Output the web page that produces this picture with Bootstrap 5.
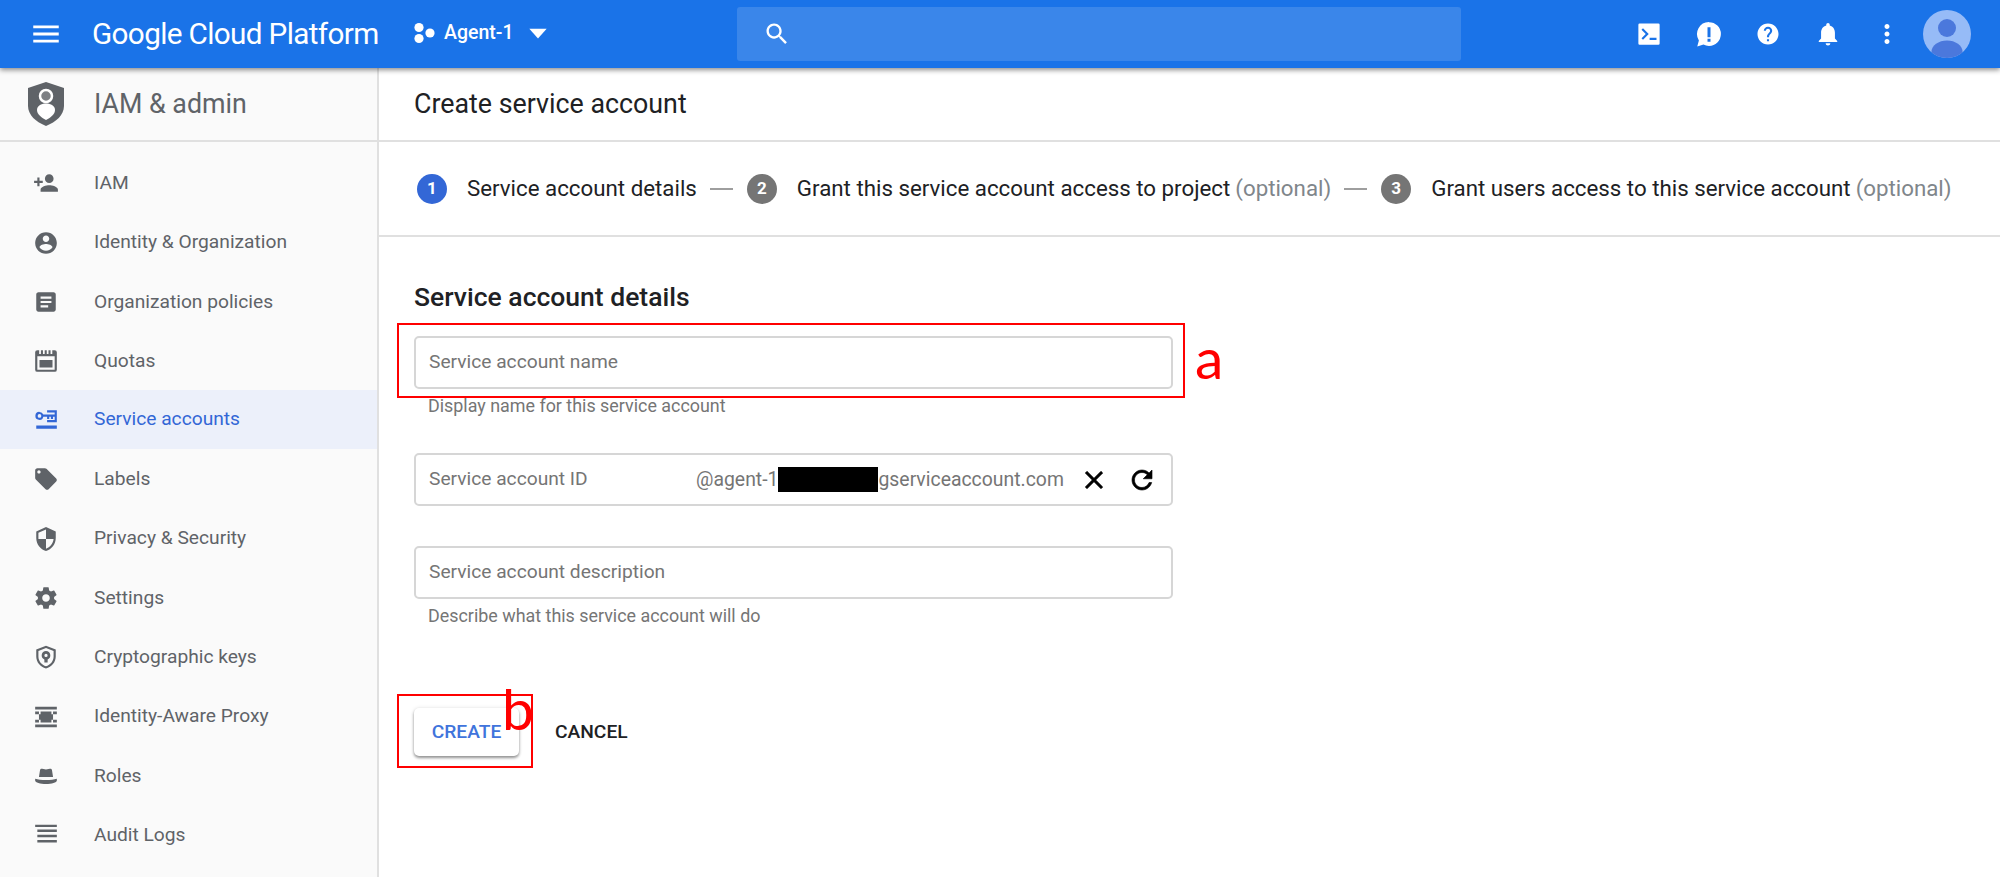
<!DOCTYPE html>
<html lang="en">
<head>
    <meta charset="UTF-8">
    <meta name="viewport" content="width=device-width, initial-scale=1.0">
    <title>Create service account</title>
    <link href="https://cdn.jsdelivr.net/npm/bootstrap@5.3.0/dist/css/bootstrap.min.css" rel="stylesheet">
    <style>
        html, body { height: 100%; overflow: hidden; }
        body { font-family: Roboto, "Liberation Sans", sans-serif; color: #202124; background: #fff; }
        svg { display: block; fill: currentColor; flex: none; }

        .topbar { height: 68px; padding: 0; background: #1a73e8; color: #fff; box-shadow: 0 2px 5px rgba(0,0,0,.45); z-index: 5; flex-wrap: nowrap; justify-content: flex-start; }
        .menu-btn { width: 34px; height: 34px; margin-left: 29px; }
        .gcp-brand { margin: 0 0 0 29px; padding: 0; width: 320px; color: #fff; font-size: 29.7px; line-height: 68px; letter-spacing: -.65px; }
        .gcp-brand:hover { color: #fff; }
        .project-pick { width: 325px; font-size: 19.5px; font-weight: 500; margin-top: -2px; }
        .project-pick .drop-arrow { margin-left: 11px; }
        .search-area { width: 724px; height: 54px; margin-top: -1px; background: #3a86ea; border-radius: 3px; padding-left: 26px; }
        .top-tools { margin-left: 173px; }
        .top-tool { width: 30px; height: 30px; margin-right: 29.5px; }
        .top-tool:nth-child(5) { margin-right: 21px; }
        .avatar-pic { width: 48px; height: 48px; }

        .page-body { height: calc(100vh - 68px); }
        .side-col { width: 379px; background: #fafafa; border-right: 2px solid #e0e0e0; }
        .side-head { height: 74px; padding-left: 27px; border-bottom: 2px solid #e0e0e0; color: #5f6368; font-size: 26.8px; }
        .side-head svg { width: 38px; height: 44px; margin-right: 29px; }
        .side-nav { padding-top: 11.5px; }
        .side-link { height: 59.4px; padding: 0 0 0 33px; color: #5f6368; font-size: 19.2px; background: transparent; border: 0; }
        .side-link svg { width: 26px; height: 26px; margin-right: 35px; }
        .side-link.active { background: #ecf0fa; color: #3367d6; }

        .main-head { height: 74px; padding-left: 35px; border-bottom: 2px solid #e0e0e0; font-size: 26.8px; }
        .stepper { height: 95px; padding-left: 38px; border-bottom: 2px solid #e0e0e0; font-size: 22.3px; white-space: nowrap; }
        .step-num { width: 30px; height: 30px; margin-right: 20px; background: #757575; color: #fff; font-size: 17px; font-weight: 700; }
        .step-num.current { background: #3367d6; }
        .step-dash { width: 23px; height: 2px; margin: 0 14px 0 13px; background: #9e9e9e; }
        .step-opt { color: #80868b; margin-left: 5px; }

        .form-area { padding-left: 35px; width: 794px; }
        .form-title { margin: 46px 0 25px; font-size: 26.5px; font-weight: 500; line-height: 28px; }
        .field-wrap { position: relative; }
        .field-box { height: 53px; padding: 0 13px; border: 2px solid #d6d6d6; border-radius: 5px; color: #757575; font-size: 19.2px; white-space: nowrap; }
        .field-gap { margin-top: 40px; }
        .field-hint { height: 64px; padding: 7px 14px 0; color: #757575; font-size: 17.9px; line-height: 20px; }
        .field-name { width: 267px; }
        .field-suffix { width: 368px; font-size: 19.4px; }
        .blackout { width: 100px; height: 25px; background: #000; }
        .field-btn { width: 30px; height: 30px; color: #000; margin-left: 18px; }
        .field-btn.first { margin-left: 15px; }
        .field-btn path { stroke: #000; stroke-width: .5; }

        .action-row { margin-top: 45px; }
        .btn-create { width: 105px; height: 48px; padding: 0; border: 0; border-radius: 5px; background: #fff; color: #4074dc; font-size: 19.2px; font-weight: 500; box-shadow: 0 2px 3px rgba(0,0,0,.4), 0 0 4px rgba(0,0,0,.1); }
        .btn-cancel { margin-left: 21px; padding: 0 15px; border: 0; color: #202124; font-size: 19.2px; font-weight: 500; }

        .red-frame { position: absolute; border: 2px solid #f00; pointer-events: none; }
        .frame-a { left: -17px; top: -13px; width: 788px; height: 75px; }
        .frame-b { left: -17px; top: -14px; width: 136px; height: 74px; }
        .red-letter { position: absolute; color: #f00; font-family: Lato, sans-serif; font-size: 57px; line-height: 57px; }
        .letter-a { left: 781px; top: -7px; }
        .letter-b { left: 88px; top: -28px; }
    </style>
</head>
<body class="d-flex flex-column">

    <nav class="navbar topbar position-relative align-items-center">
        <div class="menu-btn"><svg viewBox="0 0 24 24" width="34" height="34"><path d="M3 18h18v-2H3v2zm0-5h18v-2H3v2zm0-7v2h18V6H3z"/></svg></div>
        <a class="navbar-brand gcp-brand" href="#">Google Cloud Platform</a>
        <div class="project-pick d-flex align-items-center">
            <svg viewBox="0 0 24 24" width="24" height="24" class="me-2"><circle cx="7" cy="6.500" r="4.600"/><circle cx="7" cy="17.500" r="4.600"/><circle cx="18" cy="12" r="4.600"/></svg>
            <span>Agent-1</span>
            <svg viewBox="0 0 24 24" width="26" height="26" class="drop-arrow"><path d="M4 8h16l-8 9z"/></svg>
        </div>
        <div class="search-area d-flex align-items-center">
            <svg viewBox="0 0 24 24" width="28" height="28"><path d="M15.500 14h-.79l-.28-.27C15.410 12.590 16 11.110 16 9.500 16 5.910 13.090 3 9.500 3S3 5.910 3 9.500 5.910 16 9.500 16c1.610 0 3.090-.59 4.230-1.570l.27.28v.79l5 4.990L20.490 19l-4.990-5zm-6 0C7.010 14 5 11.990 5 9.500S7.010 5 9.500 5 14 7.010 14 9.500 11.990 14 9.500 14z"/></svg>
        </div>
        <div class="top-tools d-flex align-items-center">
            <div class="top-tool"><svg viewBox="0 0 24 24" width="30" height="30"><path fill-rule="evenodd" d="M4.500 3.500h15a1 1 0 0 1 1 1v15a1 1 0 0 1-1 1h-15a1 1 0 0 1-1-1v-15a1 1 0 0 1 1-1zM6 8.600l3.400 3.400L6 15.400l1.200 1.200 4.600-4.600-4.600-4.600zM12.500 15v1.700h5.500V15z"/></svg></div>
            <div class="top-tool"><svg viewBox="0 0 24 24" width="30" height="30"><path fill-rule="evenodd" d="M12 2.500a9.500 9.500 0 0 1 0 19c-1.600 0-3.100-.4-4.400-1.100L2.600 22l1.300-4.900A9.500 9.500 0 0 1 12 2.500zM10.800 6.500v8h2.400v-8zM10.800 15.800v2.300h2.400v-2.300z"/></svg></div>
            <div class="top-tool"><svg viewBox="-2.250 -2.250 28.500 28.500" width="30" height="30"><path d="M12 2C6.480 2 2 6.480 2 12s4.480 10 10 10 10-4.480 10-10S17.520 2 12 2zm1 17h-2v-2h2v2zm2.070-7.750l-.9.920C13.450 12.900 13 13.500 13 15h-2v-.5c0-1.100.45-2.100 1.170-2.830l1.240-1.260c.37-.36.59-.86.59-1.410 0-1.100-.9-2-2-2s-2 .9-2 2H8c0-2.210 1.790-4 4-4s4 1.790 4 4c0 .88-.36 1.680-.93 2.250z"/></svg></div>
            <div class="top-tool"><svg viewBox="-1 -1 26 26" width="30" height="30"><path d="M12 22c1.100 0 2-.9 2-2h-4c0 1.100.89 2 2 2zm6-6v-5c0-3.070-1.640-5.640-4.500-6.320V4c0-.83-.67-1.500-1.500-1.500s-1.500.67-1.500 1.500v.68C7.630 5.360 6 7.920 6 11v5l-2 2v1h16v-1l-2-2z"/></svg></div>
            <div class="top-tool"><svg viewBox="0 0 24 24" width="30" height="30"><path d="M12 8c1.100 0 2-.9 2-2s-.9-2-2-2-2 .9-2 2 .9 2 2 2zm0 2c-1.100 0-2 .9-2 2s.9 2 2 2 2-.9 2-2-.9-2-2-2zm0 6c-1.100 0-2 .9-2 2s.9 2 2 2 2-.9 2-2-.9-2-2-2z"/></svg></div>
            <div class="avatar-pic"><svg viewBox="0 0 48 48" width="48" height="48"><clipPath id="avClip"><circle cx="24" cy="24" r="24"/></clipPath><g clip-path="url(#avClip)"><rect width="48" height="48" fill="#96bbf7"/><circle cx="24" cy="18" r="9" fill="#4b78dc"/><ellipse cx="24" cy="42" rx="15.500" ry="11.500" fill="#4b78dc"/></g></svg></div>
        </div>
    </nav>

    <div class="page-body d-flex">
        <aside class="side-col flex-shrink-0">
            <div class="side-head d-flex align-items-center">
                <svg viewBox="0 0 38 44"><path fill="#5f6368" d="M19 0l18 6v18c0 9-8 16-18 20C9 40 1 33 1 24V6z"/><circle cx="19" cy="14" r="6" fill="#7d8084" stroke="#fff" stroke-width="2.500"/><path fill="#fff" d="M19 21.500c-5 0-9 2.500-9 6.500 0 4 4 7.500 9 10 5-2.500 9-6 9-10 0-4-4-6.500-9-6.500z"/></svg>
                <span>IAM &amp; admin</span>
            </div>
            <div class="list-group list-group-flush side-nav">
                <a class="list-group-item list-group-item-action side-link d-flex align-items-center" href="#"><svg viewBox="0 0 24 24"><path d="M15 12c2.210 0 4-1.790 4-4s-1.790-4-4-4-4 1.790-4 4 1.790 4 4 4zm-9-2V7H4v3H1v2h3v3h2v-3h3v-2H6zm9 4c-2.670 0-8 1.340-8 4v2h16v-2c0-2.660-5.330-4-8-4z"/></svg>IAM</a>
                <a class="list-group-item list-group-item-action side-link d-flex align-items-center" href="#"><svg viewBox="0 0 24 24"><path d="M12 2C6.480 2 2 6.480 2 12s4.480 10 10 10 10-4.480 10-10S17.520 2 12 2zm0 3c1.660 0 3 1.340 3 3s-1.340 3-3 3-3-1.340-3-3 1.340-3 3-3zm0 14.200c-2.500 0-4.710-1.280-6-3.220.03-1.990 4-3.080 6-3.080 1.990 0 5.970 1.090 6 3.080-1.290 1.940-3.500 3.220-6 3.220z"/></svg>Identity &amp; Organization</a>
                <a class="list-group-item list-group-item-action side-link d-flex align-items-center" href="#"><svg viewBox="0 0 24 24"><path d="M19 3H5c-1.100 0-2 .9-2 2v14c0 1.100.9 2 2 2h14c1.100 0 2-.9 2-2V5c0-1.100-.9-2-2-2zm-5 14H7v-2h7v2zm3-4H7v-2h10v2zm0-4H7V7h10v2z"/></svg>Organization policies</a>
                <a class="list-group-item list-group-item-action side-link d-flex align-items-center" href="#"><svg viewBox="0 0 24 24"><path fill-rule="evenodd" d="M4 2h1.700v3.500h1.600V2h1.900v3.500h1.600V2h1.900v3.500h1.600V2h1.900v3.500h1.600V2H20a2 2 0 0 1 2 2v16a2 2 0 0 1-2 2H4a2 2 0 0 1-2-2V4a2 2 0 0 1 2-2zM4 7.500V20h16V7.500zM6 11h12v7H6z"/></svg>Quotas</a>
                <a class="list-group-item list-group-item-action side-link active d-flex align-items-center" href="#"><svg viewBox="0 0 24 24"><path fill-rule="evenodd" d="M6 4.500a3.700 3.700 0 0 1 3.500 2.500H20V5h-7V3h9v11h-9v-2h7V9h-1.500v2h-2V9h-1.500v2h-2V9H9.500A3.700 3.700 0 1 1 6 4.500zM6 6.500a1.700 1.700 0 1 0 0 3.400 1.700 1.700 0 0 0 0-3.400zM3 17h19v3H3z"/></svg>Service accounts</a>
                <a class="list-group-item list-group-item-action side-link d-flex align-items-center" href="#"><svg viewBox="0 0 24 24"><path d="M21.410 11.580l-9-9C12.050 2.220 11.550 2 11 2H4c-1.100 0-2 .9-2 2v7c0 .55.22 1.050.59 1.420l9 9c.36.36.86.58 1.410.58.55 0 1.050-.22 1.410-.59l7-7c.37-.36.59-.86.59-1.410 0-.55-.23-1.060-.59-1.420zM5.500 7C4.670 7 4 6.330 4 5.500S4.670 4 5.500 4 7 4.670 7 5.500 6.330 7 5.500 7z"/></svg>Labels</a>
                <a class="list-group-item list-group-item-action side-link d-flex align-items-center" href="#"><svg viewBox="0 0 24 24"><path d="M12 1L3 5v6c0 5.550 3.840 10.740 9 12 5.160-1.260 9-6.450 9-12V5l-9-4zm0 10.990h7c-.53 4.120-3.280 7.790-7 8.940V12H5V6.300l7-3.110v8.800z"/></svg>Privacy &amp; Security</a>
                <a class="list-group-item list-group-item-action side-link d-flex align-items-center" href="#"><svg viewBox="0 0 24 24"><path d="M19.430 12.980c.04-.32.07-.64.07-.98s-.03-.66-.07-.98l2.110-1.650c.19-.15.24-.42.12-.64l-2-3.460c-.12-.22-.39-.3-.61-.22l-2.490 1c-.52-.4-1.080-.73-1.690-.98l-.38-2.650C14.460 2.180 14.250 2 14 2h-4c-.25 0-.46.18-.49.42l-.38 2.650c-.61.25-1.170.59-1.690.98l-2.490-1c-.23-.09-.49 0-.61.22l-2 3.460c-.13.22-.07.49.12.64l2.110 1.650c-.04.32-.07.65-.07.98s.03.66.07.98l-2.110 1.650c-.19.15-.24.42-.12.64l2 3.460c.12.22.39.3.61.22l2.490-1c.52.4 1.080.73 1.690.98l.38 2.650c.03.24.24.42.49.42h4c.25 0 .46-.18.49-.42l.38-2.650c.61-.25 1.170-.59 1.690-.98l2.490 1c.23.09.49 0 .61-.22l2-3.460c.12-.22.07-.49-.12-.64l-2.110-1.650zM12 15.500c-1.930 0-3.500-1.570-3.500-3.500s1.570-3.500 3.500-3.500 3.500 1.570 3.500 3.500-1.570 3.500-3.500 3.500z"/></svg>Settings</a>
                <a class="list-group-item list-group-item-action side-link d-flex align-items-center" href="#"><svg viewBox="0 0 24 24"><path fill-rule="evenodd" d="M12 1.500l9 3.500v6.500c0 5.200-3.800 9.800-9 11-5.200-1.200-9-5.800-9-11V5zM12 3.700L5 6.400v5.100c0 4.200 3 7.900 7 9 4-1.100 7-4.800 7-9V6.400zM12 6.500a4 4 0 0 1 1.500 7.700V17h-3v-2.800A4 4 0 0 1 12 6.500zM12 9a1.500 1.500 0 1 0 0 3 1.500 1.500 0 0 0 0-3z"/></svg>Cryptographic keys</a>
                <a class="list-group-item list-group-item-action side-link d-flex align-items-center" href="#"><svg viewBox="0 0 24 24"><path d="M2 2.500h20V5H2zM2 19h20v2.500H2zM2 7h3.500v2.500H2zM18.500 7H22v2.500h-3.500zM2 14.500h3.500V17H2zM18.500 14.500H22V17h-3.500zM7 7h10v2.500h1.500v5H17V17H7v-2.500H5.500v-5H7z"/></svg>Identity-Aware Proxy</a>
                <a class="list-group-item list-group-item-action side-link d-flex align-items-center" href="#"><svg viewBox="0 0 24 24"><path d="M6.500 6.500c.3-1 1-1.500 2-1.200l3.500.7 3.500-.7c1-.3 1.700.2 2 1.200l1 6.500H5.500zM2 14.500c2.500.8 6 1.300 10 1.300s7.500-.5 10-1.300v1.800c0 1.500-4.800 3-10 3s-10-1.500-10-3z"/></svg>Roles</a>
                <a class="list-group-item list-group-item-action side-link d-flex align-items-center" href="#"><svg viewBox="0 0 24 24"><path d="M2 2.500h20v2H2zM4 7h18v2.300H4zM4 11.700h18V14H4zM4 16.500h18V19H4z"/></svg>Audit Logs</a>
            </div>
        </aside>

        <main class="flex-grow-1">
            <div class="main-head d-flex align-items-center">Create service account</div>
            <div class="stepper d-flex align-items-center">
                <span class="step-num current rounded-circle d-flex align-items-center justify-content-center">1</span>
                <span>Service account details</span>
                <span class="step-dash"></span>
                <span class="step-num rounded-circle d-flex align-items-center justify-content-center">2</span>
                <span>Grant this service account access to project</span><span class="step-opt">(optional)</span>
                <span class="step-dash"></span>
                <span class="step-num rounded-circle d-flex align-items-center justify-content-center">3</span>
                <span>Grant users access to this service account</span><span class="step-opt">(optional)</span>
            </div>
            <form class="form-area">
                <h2 class="form-title">Service account details</h2>
                <div class="field-wrap">
                    <div class="field-box d-flex align-items-center">Service account name</div>
                    <div class="red-frame frame-a"></div>
                    <span class="red-letter letter-a">a</span>
                </div>
                <div class="field-hint">Display name for this service account</div>
                <div class="field-box d-flex align-items-center">
                    <span class="field-name">Service account ID</span>
                    <span class="field-suffix d-flex align-items-center"><span>@agent-1</span><span class="blackout"></span><span>gserviceaccount.com</span></span>
                    <span class="field-btn first"><svg viewBox="0 0 24 24" width="30" height="30"><path d="M19 6.410L17.590 5 12 10.590 6.410 5 5 6.410 10.590 12 5 17.590 6.410 19 12 13.410 17.590 19 19 17.590 13.410 12z"/></svg></span>
                    <span class="field-btn"><svg viewBox="0 0 24 24" width="30" height="30"><path d="M17.650 6.350C16.200 4.900 14.210 4 12 4c-4.420 0-7.990 3.580-7.990 8s3.570 8 7.990 8c3.730 0 6.840-2.550 7.730-6h-2.080c-.82 2.330-3.040 4-5.650 4-3.310 0-6-2.690-6-6s2.690-6 6-6c1.660 0 3.140.69 4.220 1.780L13 11h7V4l-2.350 2.350z"/></svg></span>
                </div>
                <div class="field-box field-gap d-flex align-items-center">Service account description</div>
                <div class="field-hint">Describe what this service account will do</div>
                <div class="action-row d-flex align-items-center field-wrap">
                    <button type="button" class="btn btn-create">CREATE</button>
                    <button type="button" class="btn btn-cancel">CANCEL</button>
                    <div class="red-frame frame-b"></div>
                    <span class="red-letter letter-b">b</span>
                </div>
            </form>
        </main>
    </div>

    <script src="https://cdn.jsdelivr.net/npm/bootstrap@5.3.0/dist/js/bootstrap.bundle.min.js"></script>
</body>
</html>
